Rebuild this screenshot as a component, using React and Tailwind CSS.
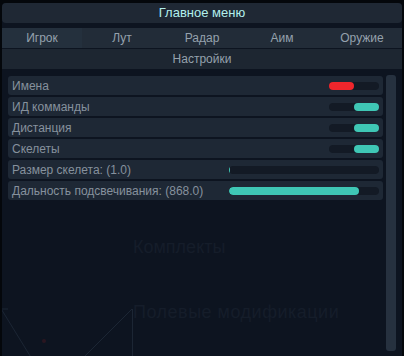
import React from "react";

const TABS = ["Игрок", "Лут", "Радар", "Аим", "Оружие"];

const ROWS = [
  { label: "Имена", type: "toggle", on: false },
  { label: "ИД комманды", type: "toggle", on: true },
  { label: "Дистанция", type: "toggle", on: true },
  { label: "Скелеты", type: "toggle", on: true },
  { label: "Размер скелета: (1.0)", type: "slider", value: 0.007 },
  { label: "Дальность подсвечивания: (868.0)", type: "slider", value: 0.868 },
];

function Toggle({ on }) {
  return (
    <div className="flex w-[50px] h-[8px] rounded-full bg-[#131a25]">
      {on ? (
        <div className="ml-auto w-[25px] h-full rounded-full bg-[#3fc7b5]" />
      ) : (
        <div className="w-[25px] h-full rounded-full bg-[#f0262c]" />
      )}
    </div>
  );
}

function Slider({ value }) {
  return (
    <div className="w-[150px] h-[8px] rounded-full bg-[#131a25] overflow-hidden">
      <div className="h-full rounded-full bg-[#3fc7b5]" style={{ width: `${Math.max(value * 100, 0.7)}%` }} />
    </div>
  );
}

export default function App() {
  return (
    <div className="relative w-[404px] h-[356px] overflow-hidden bg-[#04070b] pt-[3px] px-[2px] font-['Liberation_Sans',Arial,sans-serif]">
      <div className="relative flex flex-col h-[353px] rounded-t-[4px] bg-[#0d1420]">
        <div className="h-[20px] flex items-center justify-center rounded-[4px] bg-[#1f2834] text-[13px] text-[#b2efec]">
          Главное меню
        </div>

        <div className="mt-[5px] grid grid-cols-5 h-[20px] bg-[#222c38] text-[12px] text-[#95a1ad]">
          {TABS.map((t, i) => (
            <div key={t} className={`flex items-center justify-center ${i === 0 ? "bg-[#24303d]" : ""}`}>
              {t}
            </div>
          ))}
        </div>
        <div className="mt-px h-[20px] flex items-center justify-center bg-[#1d2631] text-[12px] text-[#95a1ad]">
          Настройки
        </div>

        <div className="flex flex-1 mt-[6px] pl-[6px] pr-[6px] pb-[5px] gap-[3px]">
          <div className="flex-1 flex flex-col">
            <div className="flex flex-col gap-[2px] mt-px">
              {ROWS.map((r) => (
                <div key={r.label} className="h-[19px] flex items-center justify-between rounded-[3px] bg-[#1e2835] pl-[4px] pr-[4px] text-[12px] text-[#86919d]">
                  <span>{r.label}</span>
                  {r.type === "toggle" ? <Toggle on={r.on} /> : <Slider value={r.value} />}
                </div>
              ))}
            </div>
            <div className="pl-[125px] mt-[34px] text-[18px] text-[#151d2a]">Комплекты</div>
            <div className="pl-[125px] mt-[38px] text-[18px] tracking-[0.5px] text-[#151d2a]">Полевые модификации</div>
          </div>
          <div className="w-[10px] rounded-[3px] bg-[#26313f]" />
        </div>

        <svg className="absolute left-0 top-[300px] pointer-events-none" width="140" height="56" viewBox="0 0 140 56">
          <line x1="-2" y1="4" x2="30" y2="56" stroke="#1c2634" strokeWidth="1" />
          <line x1="130" y1="6" x2="80" y2="56" stroke="#1c2634" strokeWidth="1" />
          <line x1="130.5" y1="6" x2="130.5" y2="56" stroke="#1c2634" strokeWidth="1" />
          <line x1="0" y1="6" x2="6" y2="6" stroke="#1c2634" strokeWidth="1" />
          <circle cx="42" cy="38" r="2" fill="#2a1620" />
        </svg>
      </div>
    </div>
  );
}
